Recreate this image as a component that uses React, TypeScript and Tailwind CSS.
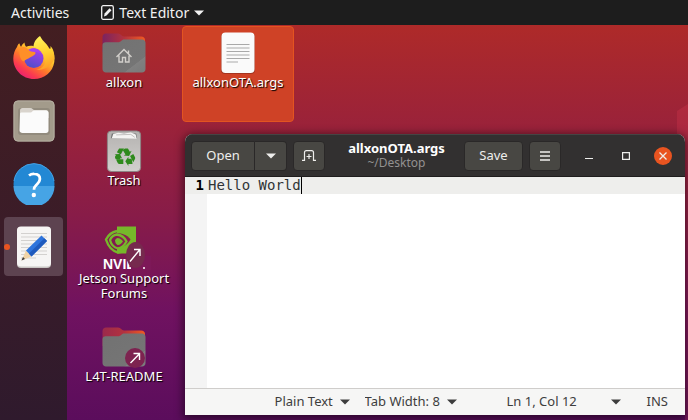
import React, { ReactNode } from "react";

const ICON = "h-[42px] w-[42px] shrink-0";

function Caret({ className = "" }: { className?: string }) {
  return (
    <svg viewBox="0 0 10 6" className={`h-[6px] w-[10px] shrink-0 ${className}`} aria-hidden="true">
      <path d="M0 .5h10L5 5.5z" fill="currentColor" />
    </svg>
  );
}

function FirefoxIcon() {
  return (
    <svg viewBox="0 0 42 43" className="h-[43px] w-[42px] shrink-0" aria-hidden="true">
      <defs>
        <linearGradient id="fxBody" x1=".85" y1=".1" x2=".2" y2=".95">
          <stop offset="0" stopColor="#fff04a" />
          <stop offset=".3" stopColor="#ffc02c" />
          <stop offset=".55" stopColor="#ff7a2a" />
          <stop offset=".8" stopColor="#fb3a50" />
          <stop offset="1" stopColor="#e81f74" />
        </linearGradient>
        <linearGradient id="fxGlobe" x1=".7" y1="0" x2=".3" y2="1">
          <stop offset="0" stopColor="#a83cf0" />
          <stop offset="1" stopColor="#4e4fc8" />
        </linearGradient>
        <linearGradient id="fxFlame" x1=".4" y1="0" x2=".6" y2="1">
          <stop offset="0" stopColor="#fff25a" />
          <stop offset=".5" stopColor="#ffd330" />
          <stop offset="1" stopColor="#ff9a26" />
        </linearGradient>
      </defs>
      <path
        d="M4 11c.5-2 2-4 2.500-3.500.4 1.500.9 2.500 1.600 3.300 1-2.200 2.300-3.600 3.500-4.300-.1 1.600.5 3.300 1.600 4.300C16 9.500 20 9.500 22 11L39 13c2 4 3 8.500 2.300 13C39.800 36 31.500 43 21 43 9.500 43 .3 34 .3 22.500.3 18 2 13.500 4 11z"
        fill="url(#fxBody)"
      />
      <path
        d="M27 0c-4 2.500-6.500 6.500-6.400 11C29 13 34 19 32.500 26c-1 4-4.500 7-9 7.500C32 35 39 29 41.300 23c.5-5-1-10-3.800-13 .2 1.700 0 3-.5 4C35 8 30 6 27 0z"
        fill="url(#fxFlame)"
      />
      <circle cx="20.800" cy="22.300" r="9.700" fill="url(#fxGlobe)" />
      <path d="M15 14c3-2.500 8-2.500 11 0l2.500 3.500-5-1.500-5 .5z" fill="#a740f2" />
      <path
        d="M7 11.500c4-1.500 7 0 8.500 2.300 1.200 1.700 3.500 1.900 6 2.200 1.200.2 1.300 1.300.5 2.200-1.300 1.500-3.800 2.300-5.500 3.600-1.800 1.400-5 2-5.200 3.700C7 25 5.500 17 7 11.500z"
        fill="#ff8f28"
      />
    </svg>
  );
}

function FilesIcon() {
  return (
    <svg viewBox="0 0 42 42" className={ICON} aria-hidden="true">
      <rect x=".5" y=".5" width="41" height="41" rx="4.500" fill="#a39b8b" />
      <rect x="1" y="1" width="40" height="40" rx="4" fill="none" stroke="#b3ac9f" />
      <rect x="5" y="8" width="32" height="27" rx="3" fill="#928b7d" />
      <path d="M7 10.500C7 9 8 8 9.500 8h8c2 0 2.200 2 4 2H33c1.500 0 2.500 1 2.500 2.500V18H7z" fill="#d9d4cd" />
      <path d="M7 14c0-1 .6-1.500 1.500-1.500h9c1.500 0 2-2 3.500-2h12c1.500 0 2.500 1 2.500 2.500v17.500c0 1.500-1 2.500-2.500 2.500h-23.500C8 33 6.500 32 6.500 30.500z" fill="#fbfbfb" />
    </svg>
  );
}

function HelpIcon() {
  return (
    <svg viewBox="0 0 42 42" className={ICON} aria-hidden="true">
      <circle cx="21" cy="21" r="20.500" fill="#2388d4" />
      <path d="M.5 23h41a20.500 20.500 0 0 1-41 0z" fill="#46a4e5" />
      <path d="M1 18a20.200 20.200 0 0 1 40 0" fill="none" stroke="#45a0e2" />
      <path
        d="M16 12.500c1.500-1.200 3.300-1.700 5.200-1.600 3.500.1 5.700 2 5.700 5 0 2.600-1.500 4-3.200 5.700-1.700 1.600-2.700 2.700-2.700 5.200"
        fill="none"
        stroke="#fff"
        strokeWidth="2.800"
      />
      <circle cx="20.800" cy="32" r="2.200" fill="#fff" />
    </svg>
  );
}

function EditorIcon() {
  return (
    <svg viewBox="0 0 42 42" className={ICON} aria-hidden="true">
      <rect x="4" y="1" width="34" height="41" rx="4" fill="#c9c6c4" />
      <rect x="4" y=".5" width="34" height="40" rx="4" fill="#f6f5f4" />
      <path d="M8 7.500h26M8 11h26M8 14.500h26M8 18h26M8 21.500h26M8 25h26M8 28.500h26M8 32h15" stroke="#d3d1cf" />
      <path d="M8.500 34.500l4.500-10 5.500 6z" fill="#f0d3a6" />
      <path d="M8.500 34.500l1.500-3.600 2 2z" fill="#3b3b3b" />
      <path d="M13 24.500L28.500 9.500l5.500 5.500L18.500 30.500z" fill="#2e74dc" />
      <path d="M16 27.500L31.500 12.300 34 15 18.500 30.500z" fill="#1f5abd" />
    </svg>
  );
}

function FolderIcon({ id, home = false, link = false }: { id: string; home?: boolean; link?: boolean }) {
  return (
    <svg viewBox="0 0 44 42" className="h-[42px] w-[44px] shrink-0 overflow-visible" aria-hidden="true">
      <defs>
        <linearGradient id={`${id}Back`}>
          <stop offset="0" stopColor={link ? "#9b2a4c" : "#7b2460"} />
          <stop offset=".5" stopColor="#b2323f" />
          <stop offset="1" stopColor="#f05a22" />
        </linearGradient>
        <linearGradient id={`${id}Front`} x1="0" y1="0" x2="1" y2="1">
          <stop offset="0" stopColor="#727272" />
          <stop offset=".75" stopColor="#757575" />
          <stop offset=".76" stopColor="#808080" />
          <stop offset="1" stopColor="#7a7a7a" />
        </linearGradient>
      </defs>
      <path d="M.5 5C.5 3 2 1.500 4 1.500h12c3 0 3.500 3 6 3h17c2.500 0 4 1.200 4 3.500v12H.5z" fill={`url(#${id}Back)`} />
      <path
        d="M.5 13.500c0-2 1.300-3.200 3.300-3.200H16c3.200 0 3.200-2.800 6.200-2.800H40c2 0 3.500 1.300 3.500 3.500v26c0 2-1.500 3.500-3.500 3.500H4c-2 0-3.500-1.500-3.500-3.500z"
        fill={`url(#${id}Front)`}
      />
      {home && (
        <path
          d="M14.500 25L22 17.500l7.500 7.500M17 23.500V30h3.500v-4.500h3V30H27v-6.500M26.500 18.500v3"
          fill="none"
          stroke="#d2cfcb"
          strokeWidth="1.400"
        />
      )}
      {link && (
        <g transform="translate(33 32)">
          <circle r="10" fill="#7d2350" />
          <path d="M-4.500 5L4 -3.800M-1.500 -4.500H4.500V2" fill="none" stroke="#fff" strokeWidth="1.400" />
        </g>
      )}
    </svg>
  );
}

function TrashIcon() {
  return (
    <svg viewBox="0 0 36 43" className="h-[42px] w-[36px] shrink-0" aria-hidden="true">
      <defs>
        <linearGradient id="bin" x2="0" y2="1">
          <stop offset="0" stopColor="#b4b2b0" />
          <stop offset="1" stopColor="#d2d0ce" />
        </linearGradient>
      </defs>
      <rect x="1" y="1" width="34" height="41.500" rx="4" fill="url(#bin)" stroke="#8c8585" />
      <path d="M4.500 8.500l1-5h25l1 5z" fill="#777" />
      <path d="M5.500 8.500L7 4l5-1.300 6 .8 7-1 5 2 1 4.500z" fill="#f4f3f2" />
      <path d="M10 5l15-.5 4 3" fill="none" stroke="#c2c0be" />
      <g fill="#2f8a1d">
        <path d="M13 19h5l-3.300 6-4-2.300z" />
        <path d="M19 19h3l2 3.200 1.800-1-2.600 5.300-5.500-.3 1.800-1.100-2.800-4.500z" />
        <path d="M24.200 26.500l3.300-1.900 1.800 3.300c.3.700.2 1.300-.2 2L27.500 33z" />
        <path d="M26.800 34.500l-.8.300h-3.500v2L19.300 32l3.200-4.600v2h3.300z" />
        <path d="M17.300 30v4.800h-4c-.8 0-1.400-.4-1.700-1L10.200 31l.6-1z" />
        <path d="M9.800 30.200L9 28.800c-.3-.6-.3-1.300 0-1.800l.8-1.300-1.500-.9 5.400-.3 2.600 5-1.700-1-.6 1.700z" />
      </g>
    </svg>
  );
}

function NvidiaIcon() {
  return (
    <svg viewBox="0 0 44 42" className="h-[42px] w-[44px] shrink-0 overflow-visible" aria-hidden="true">
      <path d="M15 -1.500h19v27H15z" fill="#76b82a" />
      <path d="M15 5c7 0 12 4 13.500 6.500-2.500 4.500-7.500 8.500-13.500 8.500z" fill="#8a1c50" />
      <path d="M15 3C10 4 6 7.500 4 11.500c2 6.500 6 11.500 12 13 7-.5 11.500-5 14.500-10" fill="none" stroke="#76b82a" strokeWidth="2.400" />
      <path d="M15 6.500c-3 .5-6 3-7 5.500 1 4 4 7.500 8 8.500 3.500-.5 6.500-3.500 8.500-7-2-4-5.500-6.500-9.500-7z" fill="none" stroke="#76b82a" strokeWidth="2.300" />
      <path d="M15 10c3 0 4.500 1.500 6 3.500-1.500 2-3.500 4-5.500 3.500-2-1-2.300-3-2.500-5z" fill="#76b82a" />
      <text x="1" y="41" fill="#fff" fontFamily="Liberation Sans, sans-serif" fontWeight="700" fontSize="14">
        NVIDIA
      </text>
      <path d="M29 28h20v14H29z" fill="#7d1858" />
      <path d="M15 28h19v-3H15zM34 26v-4" fill="none" />
      <circle cx="42" cy="40" r="1" fill="#fff" />
      <ellipse cx="33.500" cy="27" rx="9.500" ry="13" fill="#762a4e" />
      <path d="M28 33.500L37.500 22M32 21.500H38V28" fill="none" stroke="#fff" strokeWidth="1.400" />
    </svg>
  );
}

function DocumentIcon() {
  return (
    <svg viewBox="0 0 34 42" className="h-[42px] w-[34px] shrink-0" aria-hidden="true">
      <rect x="0" y="1" width="34" height="41" rx="4" fill="#a53420" />
      <rect x=".5" y=".5" width="33" height="40.500" rx="4" fill="#fafafa" />
      <path d="M5.500 12.500h23M5.500 16h23M5.500 19.500h23M5.500 23h23M5.500 26.500h23M5.500 30h11.500" stroke="#a9a9a9" strokeWidth="1.200" />
    </svg>
  );
}

function DesktopItem({ icon, label, selected = false }: { icon: ReactNode; label: string; selected?: boolean }) {
  return (
    <button className="h-[98px] w-[114px] p-px">
      <span
        className={`flex h-full w-full flex-col items-center rounded border pt-[5px] ${
          selected ? "border-[#e35420] bg-[#cf4226]" : "border-transparent"
        }`}
      >
        {icon}
        <span className="mt-px px-1 text-[13px] leading-[15px] text-white [text-shadow:1px_1px_1px_#000]">{label}</span>
      </span>
    </button>
  );
}

const HEADER_BUTTON =
  "flex h-[30px] items-center justify-center rounded border border-[#2a2828] bg-[#484743] text-[13px] text-[#eeeeec]";

function EditorWindow() {
  return (
    <section className="absolute top-[109px] right-[3px] bottom-[5px] left-[118px] flex flex-col overflow-hidden rounded-t-lg bg-white shadow-[0_2px_8px_2px_rgba(0,0,0,0.5)]">
      <header className="flex h-[43px] shrink-0 items-center border-t border-b border-t-[#464444] border-b-[#1f1d1d] bg-[#323030] px-[6px]">
        <div className="flex">
          <button className={`${HEADER_BUTTON} w-[64px] rounded-r-none`}>Open</button>
          <button aria-label="Recent files" className={`${HEADER_BUTTON} w-[32px] rounded-l-none border-l-0`}>
            <Caret />
          </button>
        </div>
        <button aria-label="New tab" className={`${HEADER_BUTTON} ml-[6px] w-[32px]`}>
          <svg viewBox="0 0 14 11" className="h-[11px] w-[14px]" fill="none" stroke="currentColor" strokeWidth="1.200" aria-hidden="true">
            <path d="M0 10.400h2.500V2.500q0-1.900 1.900-1.900h5.200q1.900 0 1.900 1.900v7.900H14M4.500 6.500h5M7 4v5" />
          </svg>
        </button>
        <div className="flex min-w-0 flex-1 flex-col items-center pl-[4px] text-white">
          <h1 className="text-[13px] leading-[14px] font-bold">allxonOTA.args</h1>
          <p className="text-[12px] leading-[16px] text-[#929190]">~/Desktop</p>
        </div>
        <button className={`${HEADER_BUTTON} w-[59px]`}>Save</button>
        <button aria-label="Menu" className={`${HEADER_BUTTON} ml-[6px] w-[32px]`}>
          <svg viewBox="0 0 10 10" className="h-[10px] w-[10px]" aria-hidden="true">
            <path d="M0 1h10M0 5h10M0 9h10" stroke="currentColor" strokeWidth="1.300" />
          </svg>
        </button>
        <div className="ml-[19px] flex items-center gap-[19px] pr-[7px] text-[#eeeeec]">
          <button aria-label="Minimize" className="flex h-[18px] w-[18px] items-center justify-center">
            <svg viewBox="0 0 8 8" className="h-2 w-2" aria-hidden="true">
              <path d="M0 6.500h8" stroke="currentColor" />
            </svg>
          </button>
          <button aria-label="Maximize" className="flex h-[18px] w-[18px] items-center justify-center">
            <svg viewBox="0 0 8 8" className="h-2 w-2" aria-hidden="true">
              <path d="M.6 .6h6.800v6.800H.6z" fill="none" stroke="currentColor" strokeWidth="1.200" />
            </svg>
          </button>
          <button aria-label="Close" className="flex h-[18px] w-[18px] items-center justify-center rounded-full bg-[#e95420]">
            <svg viewBox="0 0 8 8" className="h-2 w-2" aria-hidden="true">
              <path d="M.5 .5l7 7M7.500 .5l-7 7" stroke="currentColor" strokeWidth="1.300" />
            </svg>
          </button>
        </div>
      </header>

      <div className="flex min-h-0 flex-1 font-['DejaVu_Sans_Mono',monospace] text-[14px] leading-[17px]">
        <div className="w-[22px] shrink-0 bg-[#f4f4f4]">
          <div className="bg-[#eeeeec] pr-[3px] text-right font-bold text-black">1</div>
        </div>
        <div className="relative min-w-0 flex-1 bg-[linear-gradient(#eeeeec_17px,#fff_17px)]">
          <textarea
            aria-label="Document text"
            spellCheck={false}
            defaultValue="Hello World"
            className="block h-full w-full resize-none bg-transparent pl-px text-[#2e3436] outline-none"
          />
          <span className="absolute top-0 left-[11ch] ml-px h-[17px] w-px bg-black" />
        </div>
      </div>

      <footer className="flex h-[27px] shrink-0 items-center justify-end border-t border-[#cfcdcb] bg-[#f6f6f5] pr-[17px] text-[13px] text-[#3d3d3d]">
        <label className="flex items-center gap-[6px]">
          <select aria-label="Highlight mode" className="appearance-none">
            <option>Plain Text</option>
          </select>
          <Caret />
        </label>
        <label className="ml-[15px] flex items-center gap-[6px]">
          <select aria-label="Tab width" className="appearance-none">
            <option>Tab Width: 8</option>
          </select>
          <Caret />
        </label>
        <button className="ml-[50px] flex w-[114px] items-center justify-between">
          Ln 1, Col 12
          <Caret />
        </button>
        <span className="ml-[26px]">INS</span>
      </footer>
    </section>
  );
}

export default function App() {
  return (
    <div className="flex h-screen flex-col overflow-hidden font-['Noto_Sans','Open_Sans',sans-serif]">
      <nav className="flex h-[25px] shrink-0 items-center bg-[#1d1d1d] pl-[11px] text-[14px] text-[#f2f2f2]">
        <button>Activities</button>
        <button className="ml-[32px] flex items-center gap-[5px]">
          <svg viewBox="0 0 13 15" className="h-[15px] w-[13px]" aria-hidden="true">
            <rect x=".7" y=".7" width="11.600" height="13.600" rx="1.500" fill="none" stroke="currentColor" strokeWidth="1.300" />
            <path d="M3 11.500l.6-3L8.500 3.300l2 2L5.500 10.500z" fill="currentColor" />
          </svg>
          Text Editor
          <Caret />
        </button>
      </nav>

      <div className="flex min-h-0 flex-1">
        <aside className="flex w-[67px] shrink-0 flex-col items-center bg-[linear-gradient(#431e21,#3b1c28_50%,#2f1a2d)]">
          <button aria-label="Firefox" className="flex h-[64px] w-full items-center justify-center">
            <FirefoxIcon />
          </button>
          <button aria-label="Files" className="flex h-[63px] w-full items-center justify-center">
            <FilesIcon />
          </button>
          <button aria-label="Help" className="flex h-[63px] w-full items-center justify-center">
            <HelpIcon />
          </button>
          <button aria-label="Text Editor" className="relative mt-[2px] flex h-[59px] w-[59px] items-center justify-center rounded bg-[#5d4350]">
            <span className="absolute top-[27px] left-0 h-[6px] w-[6px] rounded-full bg-[#e95420]" />
            <EditorIcon />
          </button>
        </aside>

        <main className="relative min-w-0 flex-1 bg-[linear-gradient(#ae2a29,#9a223a_26%,#881c48_48%,#701260_72%,#5b0d5c)]">
          <svg viewBox="0 0 11 395" className="absolute top-0 right-0 h-[395px] w-[11px]" aria-hidden="true">
            <path d="M0 86L11 79V395H8V120L0 112z" fill="#ff4a60" opacity=".18" />
          </svg>
          <div className="grid w-fit grid-flow-col grid-rows-[repeat(4,98px)]">
            <DesktopItem icon={<FolderIcon id="home" home />} label="allxon" />
            <DesktopItem icon={<TrashIcon />} label="Trash" />
            <DesktopItem icon={<NvidiaIcon />} label="Jetson Support Forums" />
            <DesktopItem icon={<FolderIcon id="readme" link />} label="L4T-README" />
            <DesktopItem icon={<DocumentIcon />} label="allxonOTA.args" selected />
          </div>
          <EditorWindow />
        </main>
      </div>
    </div>
  );
}
